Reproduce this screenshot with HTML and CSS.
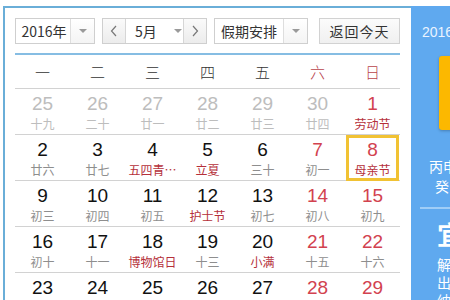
FILE: index.html
```html
<!DOCTYPE html>
<html>
<head>
<meta charset="utf-8">
<link rel="stylesheet" href="styles.css">
</head>
<body>
<div class="page">
  <div class="cal">
    <div class="main">
      <div class="toolbar">
        <div class="sel sel-year">
          <span class="sel-text">2016年</span>
          <span class="sel-arrow"><i class="tri"></i></span>
        </div>
        <div class="sel sel-month">
          <span class="nav"><svg width="8" height="12" viewBox="0 0 8 12"><polyline points="6,1 1.5,6 6,11" fill="none" stroke="#777" stroke-width="1.2"/></svg></span>
          <span class="mid"><span class="mid-text">5月</span><i class="tri"></i></span>
          <span class="nav nav-next"><svg width="8" height="12" viewBox="0 0 8 12"><polyline points="2,1 6.5,6 2,11" fill="none" stroke="#777" stroke-width="1.2"/></svg></span>
        </div>
        <div class="sel sel-hol">
          <span class="sel-text">假期安排</span>
          <span class="sel-arrow"><i class="tri"></i></span>
        </div>
        <div class="btn-today">返回今天</div>
      </div>
      <div class="grid">
        <div class="row head">
          <span>一</span><span>二</span><span>三</span><span>四</span><span>五</span><span class="wk">六</span><span class="wk">日</span>
        </div>
        <div class="row">
          <div class="cell other"><b>25</b><s>十九</s></div>
          <div class="cell other"><b>26</b><s>二十</s></div>
          <div class="cell other"><b>27</b><s>廿一</s></div>
          <div class="cell other"><b>28</b><s>廿二</s></div>
          <div class="cell other"><b>29</b><s>廿三</s></div>
          <div class="cell other"><b>30</b><s>廿四</s></div>
          <div class="cell red"><b>1</b><s class="fest">劳动节</s></div>
        </div>
        <div class="row">
          <div class="cell"><b>2</b><s>廿六</s></div>
          <div class="cell"><b>3</b><s>廿七</s></div>
          <div class="cell"><b>4</b><s class="fest">五四青…</s></div>
          <div class="cell"><b>5</b><s class="fest">立夏</s></div>
          <div class="cell"><b>6</b><s>三十</s></div>
          <div class="cell red"><b>7</b><s>初一</s></div>
          <div class="cell red today"><b>8</b><s class="fest">母亲节</s></div>
        </div>
        <div class="row">
          <div class="cell"><b>9</b><s>初三</s></div>
          <div class="cell"><b>10</b><s>初四</s></div>
          <div class="cell"><b>11</b><s>初五</s></div>
          <div class="cell"><b>12</b><s class="fest">护士节</s></div>
          <div class="cell"><b>13</b><s>初七</s></div>
          <div class="cell red"><b>14</b><s>初八</s></div>
          <div class="cell red"><b>15</b><s>初九</s></div>
        </div>
        <div class="row">
          <div class="cell"><b>16</b><s>初十</s></div>
          <div class="cell"><b>17</b><s>十一</s></div>
          <div class="cell"><b>18</b><s class="fest">博物馆日</s></div>
          <div class="cell"><b>19</b><s>十三</s></div>
          <div class="cell"><b>20</b><s class="fest">小满</s></div>
          <div class="cell red"><b>21</b><s>十五</s></div>
          <div class="cell red"><b>22</b><s>十六</s></div>
        </div>
        <div class="row">
          <div class="cell"><b>23</b><s>十七</s></div>
          <div class="cell"><b>24</b><s>十八</s></div>
          <div class="cell"><b>25</b><s>十九</s></div>
          <div class="cell"><b>26</b><s>二十</s></div>
          <div class="cell"><b>27</b><s>廿一</s></div>
          <div class="cell red"><b>28</b><s>廿二</s></div>
          <div class="cell red"><b>29</b><s>廿三</s></div>
        </div>
      </div>
    </div>
    <div class="side">
      <div class="side-date">2016-05-08 星期日</div>
      <div class="big-day">8</div>
      <div class="lunar1">丙申年 四月初二</div>
      <div class="lunar2">癸巳月 丁酉日</div>
      <div class="side-line"></div>
      <div class="yiji">
        <div class="yi">
          <div class="yi-title">宜</div>
          <div class="yi-list">
            <div class="yi-item">解除</div>
            <div class="yi-item">出行</div>
            <div class="yi-item">纳采</div>
          </div>
        </div>
      </div>
    </div>
  </div>
</div>
</body>
</html>
```

FILE: styles.css
```css
html, body {
  margin: 0;
  padding: 0;
  background: #fff;
}
body {
  width: 450px;
  height: 300px;
  overflow: hidden;
  font-family: "Liberation Sans", Arial, "Noto Sans CJK SC", sans-serif;
}
.page {
  padding: 6px 0 0 3px;
}
.cal {
  display: flex;
  height: 294px;
  overflow: hidden;
}
.main {
  width: 385px;
  flex: none;
  border-top: 2px solid #6aaed8;
  border-left: 2px solid #6aaed8;
  padding: 10px 11px 0 10px;
}
.toolbar {
  display: flex;
  height: 26px;
  font-size: 14px;
  color: #333;
  font-family: "Noto Sans CJK SC", sans-serif;
}
.sel {
  display: flex;
  box-sizing: border-box;
  height: 26px;
  border: 1px solid #cfcfcf;
  background: #fff;
}
.sel-year { width: 80px; }
.sel-month { width: 105px; margin-left: 7px; }
.sel-hol { width: 94px; margin-left: 7px; }
.sel-text {
  flex: 1;
  display: flex;
  align-items: center;
  justify-content: center;
  line-height: 24px;
}
.sel-year .sel-text { padding-left: 2px; }
.sel-arrow {
  width: 23px;
  border-left: 1px solid #dedede;
  display: flex;
  align-items: center;
  justify-content: center;
  background: linear-gradient(#fff, #f4f4f4);
}
.tri {
  display: block;
  width: 0;
  height: 0;
  border-left: 4px solid transparent;
  border-right: 4px solid transparent;
  border-top: 4px solid #9a9a9a;
}
.nav {
  width: 22px;
  display: flex;
  align-items: center;
  justify-content: center;
  background: linear-gradient(#fafafa, #ececec);
  border-right: 1px solid #d6d6d6;
}
.nav-next {
  border-right: none;
  border-left: 1px solid #d6d6d6;
}
.mid {
  flex: 1;
  display: flex;
  align-items: center;
  padding-left: 9px;
  gap: 17px;
}
.btn-today {
  margin-left: 11px;
  width: 81px;
  box-sizing: border-box;
  height: 26px;
  border: 1px solid #d2d2d2;
  background: linear-gradient(#fbfbfb, #f0f0f0);
  display: flex;
  align-items: center;
  justify-content: center;
  letter-spacing: 1px;
}
.grid {
  margin-top: 9px;
  border-top: 2px solid #86bde3;
}
.row {
  display: grid;
  grid-template-columns: repeat(7, 55px);
  height: 45px;
  border-bottom: 1px solid #d2d2d2;
}
.row.head {
  height: 33px;
  align-items: center;
  font-family: "Noto Sans CJK SC", sans-serif;
  font-size: 15px;
  color: #333;
  font-weight: 300;
}
.row.head span {
  text-align: center;
}
.row.head .wk {
  color: #b8434b;
}
.cell {
  position: relative;
  text-align: center;
  padding-top: 5px;
}
.cell b {
  display: block;
  font-weight: normal;
  font-size: 19px;
  line-height: 20px;
  color: #111;
}
.cell s {
  display: block;
  text-decoration: none;
  font-family: "Noto Sans CJK SC", sans-serif;
  font-size: 12px;
  line-height: 16px;
  margin-top: 2px;
  color: #8e8e8e;
  white-space: nowrap;
}
.cell.other b, .cell.other s {
  color: #bdbdbd;
}
.cell.red b {
  color: #d2424f;
}
.cell s.fest {
  color: #b5303a;
}
.cell.today::after {
  content: "";
  position: absolute;
  left: 1px;
  right: 1px;
  top: 0;
  bottom: -1px;
  border: 3px solid #f1c233;
}
.side {
  width: 130px;
  flex: none;
  background: #5fa9ef;
  color: #fff;
  font-family: "Noto Sans CJK SC", sans-serif;
  overflow: hidden;
}
.side-date {
  font-family: "Liberation Sans", Arial, "Noto Sans CJK SC", sans-serif;
  font-size: 14px;
  line-height: 18px;
  margin-top: 17px;
  padding-left: 11px;
  white-space: nowrap;
  color: #eaf4ff;
}
.big-day {
  margin: 15px 0 0 28px;
  width: 90px;
  height: 74px;
  background: #fcb800;
  border-radius: 3px;
  box-shadow: 0 1px 3px rgba(0,0,0,0.25);
  font-family: "Liberation Sans", Arial, sans-serif;
  font-size: 50px;
  line-height: 74px;
  text-align: center;
}
.lunar1 {
  margin-top: 26px;
  font-size: 14px;
  line-height: 20px;
  padding-left: 18px;
  white-space: nowrap;
}
.lunar2 {
  font-size: 14px;
  line-height: 20px;
  padding-left: 24px;
  white-space: nowrap;
}
.side-line {
  margin: 11px 0 0 9px;
  height: 2px;
  background: #9fcdf7;
}
.yiji {
  display: flex;
  padding-left: 26px;
  margin-top: 10px;
}
.yi-title {
  font-size: 26px;
  line-height: 30px;
  font-weight: bold;
}
.yi-list {
  margin-top: 6px;
}
.yi-item {
  font-size: 14px;
  line-height: 18px;
  letter-spacing: 2px;
  white-space: nowrap;
}
```
